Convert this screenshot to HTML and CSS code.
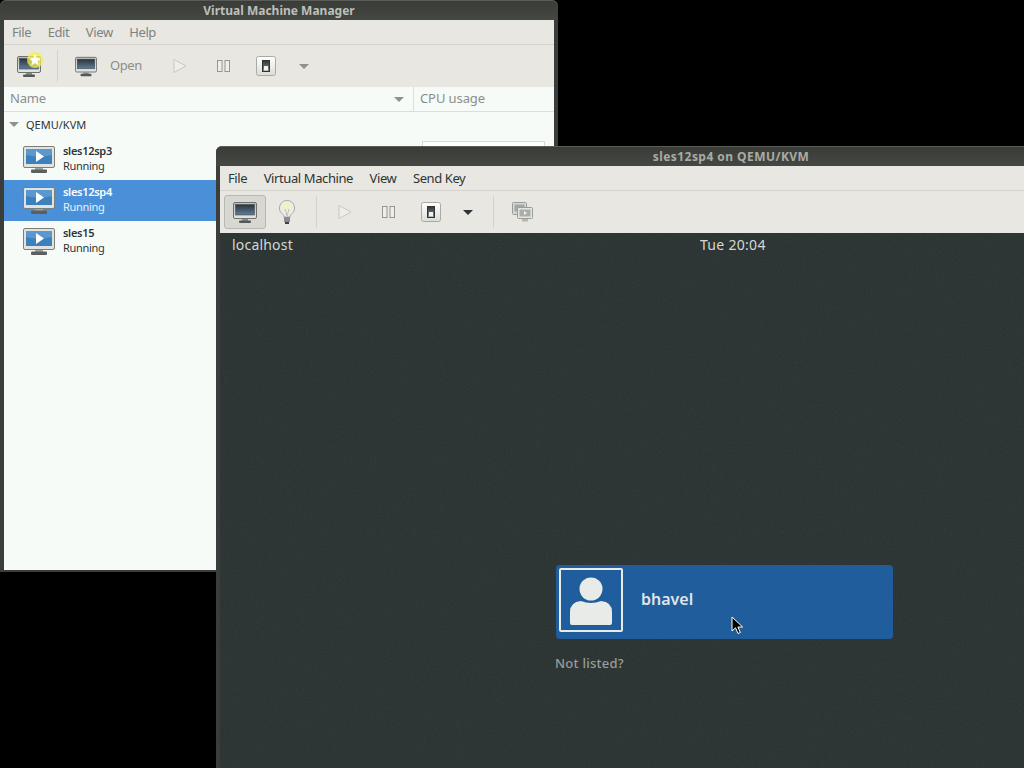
FILE: index.html
```html
<!DOCTYPE html>
<html lang="en">
<head>
  <meta charset="UTF-8">
  <title>Virtual Machine Manager</title>
  <link rel="stylesheet" href="styles.css">
</head>
<body>

  <svg class="defs" aria-hidden="true">
    <defs>
      <linearGradient id="screen-dark" x1="0" y1="0" x2="0" y2="1">
        <stop offset="0" stop-color="#2b3338"/>
        <stop offset="1" stop-color="#5f7f9a"/>
      </linearGradient>
      <linearGradient id="bezel" x1="0" y1="0" x2="0" y2="1">
        <stop offset="0" stop-color="#bcbfbb"/>
        <stop offset="1" stop-color="#e4e5e1"/>
      </linearGradient>
      <linearGradient id="switch-face" x1="0" y1="0" x2="0" y2="1">
        <stop offset="0" stop-color="#ffffff"/>
        <stop offset="1" stop-color="#dcdcd6"/>
      </linearGradient>
      <linearGradient id="rocker" x1="0" y1="0" x2="0" y2="1">
        <stop offset="0" stop-color="#2e3436"/>
        <stop offset="1" stop-color="#8d8f8b"/>
      </linearGradient>
      <filter id="grain">
        <feTurbulence type="fractalNoise" baseFrequency="0.9" numOctaves="2"/>
        <feColorMatrix type="saturate" values="0"/>
      </filter>
      <symbol id="monitor" viewBox="0 0 24 21">
        <rect x="0.5" y="0.5" width="23" height="16" rx="1.5" fill="url(#bezel)" stroke="#6e706c"/>
        <rect x="2.5" y="2.5" width="19" height="10.5" fill="url(#screen-dark)" stroke="#3a3f42" stroke-width="0.5"/>
        <rect x="9" y="17" width="6" height="2" fill="#8a8c88"/>
        <rect x="6" y="18.5" width="12" height="2.5" rx="1" fill="#55585a"/>
      </symbol>
      <symbol id="vm-running" viewBox="0 0 32 27">
        <rect x="0.5" y="0.5" width="31" height="21" rx="1.5" fill="#e2e3df" stroke="#7c7e7a"/>
        <rect x="3" y="3" width="26" height="15" fill="#3c80bd"/>
        <path d="M3 3h26v6q-13 3-26 0z" fill="#5b98cf"/>
        <path d="M13 5l8 5.500-8 5.500z" fill="#fff"/>
        <rect x="12" y="22" width="8" height="2" fill="#a0a29e"/>
        <rect x="8" y="23.500" width="16" height="3.500" rx="1" fill="#5c5f60"/>
      </symbol>
      <symbol id="play" viewBox="0 0 14 16">
        <path d="M1 1.500l12 6.500-12 6.500z" fill="#efefe9" stroke="#c8c9c2"/>
      </symbol>
      <symbol id="pause" viewBox="0 0 13 12">
        <rect x="0.500" y="0.500" width="4.500" height="11" fill="#efefe9" stroke="#95968f"/>
        <rect x="8" y="0.500" width="4.500" height="11" fill="#efefe9" stroke="#95968f"/>
      </symbol>
      <symbol id="switch" viewBox="0 0 20 20">
        <rect x="0.500" y="0.500" width="19" height="19" rx="2" fill="url(#switch-face)" stroke="#a9aaa4"/>
        <rect x="6.500" y="4.500" width="7" height="11" fill="url(#rocker)" stroke="#2e3436"/>
        <rect x="8" y="10" width="4" height="4.500" fill="#f2f2ee"/>
      </symbol>
      <symbol id="bulb" viewBox="0 0 16 24">
        <path d="M8 .5a7.500 7.500 0 0 0-4.500 13.500q1.500 1.200 1.500 3h6q0-1.800 1.500-3a7.500 7.500 0 0 0-4.500-13.500z" fill="#ecece6" stroke="#a9aba5"/>
        <ellipse cx="8" cy="6.500" rx="4" ry="3" fill="#f4f0c0"/>
        <path d="M6 9l2 7 2-7" fill="none" stroke="#b5b6ae" stroke-width="0.800"/>
        <rect x="5" y="17" width="6" height="5" fill="#8b8d8d"/>
        <rect x="6" y="22" width="4" height="2" fill="#3c3f40"/>
      </symbol>
      <symbol id="screens" viewBox="0 0 21 20">
        <rect x="0.500" y="0.500" width="14" height="12" rx="1" fill="#d6d7d1" stroke="#9a9c97"/>
        <rect x="2.500" y="2.500" width="10" height="7" fill="#a4a7a7"/>
        <rect x="5.500" y="5.500" width="15" height="11" rx="1" fill="#e4e5df" stroke="#9a9c97"/>
        <rect x="7.500" y="7.500" width="11" height="7" fill="#a9adad"/>
        <path d="M12 9l3 2-3 2z" fill="#f2f2ee"/>
        <rect x="10" y="17" width="6" height="2.500" fill="#b5b7b2"/>
      </symbol>
    </defs>
  </svg>

  <!-- main manager window -->
  <div class="window manager">
    <div class="titlebar">Virtual Machine Manager</div>
    <div class="menubar menubar-dim">
      <span>File</span>
      <span>Edit</span>
      <span>View</span>
      <span>Help</span>
    </div>
    <div class="toolbar">
      <div class="tool t-new">
        <svg class="ic-monitor"><use href="#monitor"/></svg>
        <svg class="star" viewBox="0 0 16 16">
          <circle cx="8" cy="8" r="8" fill="#f4f04a" opacity="0.75"/>
          <path d="M8 2l1.800 4 4.200.4-3.200 2.800 1 4.300-3.800-2.300-3.800 2.300 1-4.300-3.200-2.800 4.200-.4z" fill="#fdfdf0"/>
        </svg>
      </div>
      <div class="sep sep-a"></div>
      <div class="tool t-open">
        <svg class="ic-monitor"><use href="#monitor"/></svg>
        <span>Open</span>
      </div>
      <div class="tool t-play"><svg class="ic-play"><use href="#play"/></svg></div>
      <div class="tool t-pause"><svg class="ic-pause"><use href="#pause"/></svg></div>
      <div class="tool t-switch"><svg class="ic-switch"><use href="#switch"/></svg></div>
      <div class="tool t-arrow"><div class="arrow"></div></div>
    </div>

    <div class="list-head">
      <div class="col-name"><span class="col-label">Name</span> <div class="arrow"></div></div>
      <div class="col-cpu">CPU usage</div>
    </div>

    <div class="list">
      <div class="group"><div class="arrow"></div>QEMU/KVM</div>
      <div class="vm">
        <svg class="ic-vm"><use href="#vm-running"/></svg>
        <div class="vm-text">
          <div class="vm-name">sles12sp3</div>
          <div class="vm-state">Running</div>
        </div>
        <div class="cpu-graph"></div>
      </div>
      <div class="vm selected">
        <svg class="ic-vm"><use href="#vm-running"/></svg>
        <div class="vm-text">
          <div class="vm-name">sles12sp4</div>
          <div class="vm-state">Running</div>
        </div>
      </div>
      <div class="vm">
        <svg class="ic-vm"><use href="#vm-running"/></svg>
        <div class="vm-text">
          <div class="vm-name">sles15</div>
          <div class="vm-state">Running</div>
        </div>
      </div>
    </div>
  </div>

  <!-- guest console window -->
  <div class="window console">
    <div class="titlebar">sles12sp4 on QEMU/KVM</div>
    <div class="menubar">
      <span>File</span>
      <span>Virtual Machine</span>
      <span>View</span>
      <span>Send Key</span>
    </div>
    <div class="toolbar">
      <div class="tool c-console"><svg class="ic-monitor"><use href="#monitor"/></svg></div>
      <div class="tool c-bulb"><svg class="ic-bulb"><use href="#bulb"/></svg></div>
      <div class="sep sep-b"></div>
      <div class="tool c-play"><svg class="ic-play"><use href="#play"/></svg></div>
      <div class="tool c-pause"><svg class="ic-pause"><use href="#pause"/></svg></div>
      <div class="tool c-switch"><svg class="ic-switch"><use href="#switch"/></svg></div>
      <div class="tool c-arrow"><div class="arrow arrow-dark"></div></div>
      <div class="sep sep-c"></div>
      <div class="tool c-screens"><svg class="ic-screens"><use href="#screens"/></svg></div>
    </div>

    <div class="guest">
      <svg class="grain"><rect width="100%" height="100%" filter="url(#grain)"/></svg>
      <div class="guest-top">
        <span class="guest-host">localhost</span>
        <span class="guest-clock">Tue 20:04</span>
      </div>
      <div class="login">
        <div class="user-card">
          <div class="avatar">
            <svg viewBox="0 0 60 60" class="avatar-img">
              <circle cx="30" cy="19" r="11.500" fill="#e8ebe8"/>
              <path d="M11 55q-2 0-2-2V42q0-10 11-11q10 4 20 0q11 1 11 11v11q0 2-2 2z" fill="#e8ebe8"/>
            </svg>
          </div>
          <span class="user-name">bhavel</span>
        </div>
        <div class="not-listed">Not listed?</div>
      </div>
    </div>
  </div>

  <svg class="cursor" viewBox="0 0 13 19">
    <path d="M1 1v14l3.500-3.200 2.500 5.700 2.400-1-2.500-5.500h4.800z" fill="#000" stroke="#fff"/>
  </svg>

</body>
</html>
```

FILE: styles.css
```css
body {
  margin: 0;
  width: 1024px;
  height: 768px;
  overflow: hidden;
  position: relative;
  background-color: #000;
  font-family: 'Noto Sans', sans-serif;
  font-size: 13px;
  color: #2e3436;
}

.defs {
  position: absolute;
  width: 0;
  height: 0;
}

/* windows sit on a free desktop */
.window {
  position: absolute;
  display: flex;
  flex-direction: column;
  box-sizing: border-box;
  background-color: #3a3d3a;
  border-radius: 6px 6px 0 0;
  padding: 0 4px 2px;
}

.manager {
  left: 0;
  top: 0;
  width: 558px;
  height: 572px;
}

.console {
  left: 216px;
  top: 146px;
  width: 808px;
  height: 622px;
  padding: 0 0 0 4px;
  border-top-right-radius: 0;
}

.titlebar {
  height: 20px;
  flex: none;
  margin: 0 -4px;
  line-height: 20px;
  text-align: center;
  font-size: 12px;
  font-weight: 700;
  color: #bdbfb9;
  border-top: 1px solid #5a5c58;
  box-sizing: border-box;
  background: linear-gradient(#3a3c38, #454743);
  border-radius: 6px 6px 0 0;
}

.console .titlebar {
  margin-right: 0;
  padding-left: 222px;
  letter-spacing: 0.45px;
  color: #a9aba5;
  border-top-right-radius: 0;
}

.menubar {
  height: 24px;
  flex: none;
  display: flex;
  align-items: center;
  padding-left: 8px;
  background-color: #e8e7e1;
  border-bottom: 1px solid #d3d2cc;
  letter-spacing: -0.4px;
  line-height: 22px;
}

.menubar span {
  margin-right: 16.5px;
}

.menubar-dim {
  color: #7f8280;
}

.toolbar {
  height: 42px;
  flex: none;
  display: flex;
  align-items: center;
  background-color: #e8e7e1;
}

.tool {
  height: 34px;
  display: flex;
  align-items: center;
  justify-content: center;
  position: relative;
  flex: none;
}

.sep {
  width: 1px;
  height: 32px;
  flex: none;
  background-color: #d3d2cc;
}

.sep-a { margin-left: 3px; }
.sep-b { margin-left: 8px; }
.sep-c { margin-left: 14px; }

.ic-monitor { width: 24px; height: 21px; }
.ic-play { width: 14px; height: 16px; }
.ic-pause { width: 13px; height: 12px; }
.ic-switch { width: 20px; height: 20px; }
.ic-bulb { width: 16px; height: 24px; }
.ic-screens { width: 21px; height: 20px; }
.ic-vm { width: 32px; height: 27px; flex: none; }

.t-new { width: 50px; }
.t-open {
  width: 106px;
  justify-content: flex-start;
  padding-left: 17px;
  box-sizing: border-box;
  color: #8b8e8b;
  gap: 13px;
  letter-spacing: -0.4px;
  line-height: 32px;
}
.t-open span { margin-top: -2px; }
.t-open .ic-monitor { width: 22px; }
.t-play { width: 31px; }
.t-pause { width: 57px; }
.t-switch { width: 28px; }
.t-arrow { width: 48px; }

.c-console {
  width: 40px;
  height: 32px;
  margin-left: 4px;
  background-color: #d8d7d1;
  border: 1px solid #b8b8b2;
  border-radius: 3px;
}
.c-bulb { width: 42px; }
.c-play { width: 55px; }
.c-pause { width: 33px; }
.c-switch { width: 52px; }
.c-arrow { width: 22px; }
.c-screens { width: 56px; }

/* star badge over the "new vm" icon */
.star {
  position: absolute;
  left: 23px;
  top: 3px;
  width: 16px;
  height: 16px;
}

.arrow {
  width: 0;
  height: 0;
  flex: none;
  border-left: 5px solid transparent;
  border-right: 5px solid transparent;
  border-top: 5px solid #8f918d;
}

.arrow-dark { border-top-color: #2e3436; }

.list-head {
  height: 24px;
  flex: none;
  display: flex;
  background-color: #f7fbf8;
  border-bottom: 1px solid #dcdfd9;
  color: #8b8e8b;
  line-height: 23px;
}

.col-name {
  width: 410px;
  box-sizing: border-box;
  padding: 0 9px 0 6px;
  display: flex;
  justify-content: space-between;
  align-items: center;
  border-right: 1px solid #dcdfd9;
  letter-spacing: -0.2px;
}

.col-label {
  margin-top: -2px;
}

.col-cpu {
  padding-left: 6px;
  letter-spacing: -0.1px;
}

.list {
  flex: 1;
  background-color: #f7fbf8;
}

.group {
  height: 25px;
  padding-bottom: 2px;
  display: flex;
  align-items: center;
  gap: 7px;
  padding-left: 5px;
  font-size: 11px;
}

.vm {
  height: 41px;
  display: flex;
  align-items: center;
  gap: 8px;
  padding-left: 19px;
  font-size: 11px;
  line-height: 15px;
  position: relative;
}

.vm-text {
  margin-top: -4px;
  letter-spacing: -0.3px;
}

.vm-name {
  font-weight: 600;
}

.selected {
  background-color: #4a90d9;
  color: #fff;
}

.selected .vm-state {
  color: #e6f0fa;
}

.cpu-graph {
  position: absolute;
  left: 418px;
  top: 2px;
  width: 123px;
  height: 30px;
  box-sizing: border-box;
  background-color: #fff;
  border: 1px solid #d8d9d3;
}

.guest {
  flex: 1;
  position: relative;
  background-color: #283130;
  color: #d6d8d2;
}

.grain {
  position: absolute;
  left: 0;
  top: 0;
  width: 100%;
  height: 100%;
  opacity: 0.08;
}

.guest-top {
  height: 24px;
  display: flex;
  align-items: center;
  position: relative;
  font-size: 14px;
  letter-spacing: 0.2px;
  line-height: 24px;
}

.guest-host {
  margin-left: 12px;
}

.guest-clock {
  margin-left: 407px;
  letter-spacing: 0.3px;
}

.login {
  position: relative;
  margin: 308px 0 0 336px;
  width: 337px;
}

.user-card {
  height: 74px;
  display: flex;
  align-items: center;
  gap: 18px;
  padding-left: 3px;
  box-sizing: border-box;
  background-color: #205d9c;
  border-radius: 4px;
}

.avatar {
  width: 64px;
  height: 64px;
  box-sizing: border-box;
  border: 2px solid #e8ebe8;
  border-radius: 2px;
  margin-top: -4px;
}

.avatar-img {
  width: 60px;
  height: 60px;
  display: block;
}

.user-name {
  font-size: 16px;
  font-weight: 600;
  color: #dfe4e8;
  margin-top: -6px;
}

.not-listed {
  margin-top: 15px;
  margin-left: -1px;
  font-weight: 500;
  letter-spacing: 0.25px;
  color: #9b9d97;
}

.cursor {
  position: absolute;
  left: 731px;
  top: 616px;
  width: 13px;
  height: 19px;
}
```
